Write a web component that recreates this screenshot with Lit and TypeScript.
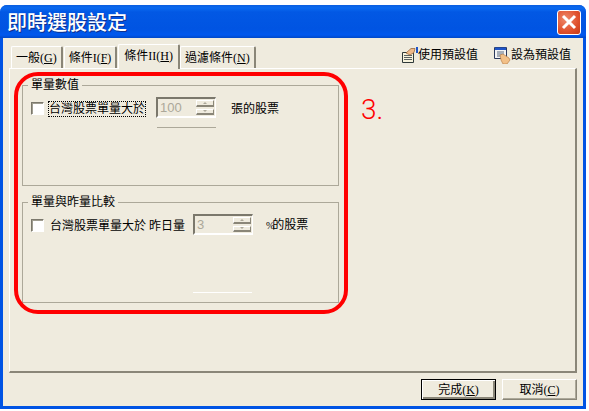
import { LitElement, css, html } from "lit";
import { customElement } from "lit/decorators.js";

@customElement("app-root")
export class AppRoot extends LitElement {
  static styles = css`
    :host {
      display: block;
      width: 589px;
      height: 411px;
      background: #fff;
      font-family: "Liberation Serif", "Noto Sans CJK TC", sans-serif;
      font-size: 12px;
      line-height: 14px;
      color: #000;
      overflow: hidden;
    }
    .window {
      position: relative;
      box-sizing: border-box;
      width: 586px;
      height: 404px;
      margin-top: 5px;
      display: flex;
      flex-direction: column;
      background: #0053e4;
      border-radius: 7px 7px 0 0;
      padding: 0 3px 3px;
    }
    .titlebar {
      flex: none;
      height: 33px;
      margin: 0 -3px;
      padding: 0 0 0 7px;
      display: flex;
      align-items: center;
      justify-content: space-between;
      border-radius: 7px 7px 0 0;
      background: linear-gradient(to bottom, #0a5ee0 0, #0a6af0 3px, #0258e4 7px, #0054e2 24px, #0058ee 30px, #0048c8 33px);
    }
    .title {
      color: #fff;
      font-family: "Noto Sans CJK TC", sans-serif;
      font-size: 20px;
      line-height: 24px;
      font-weight: 500;
      text-shadow: 1px 1px 0 #0f2f8c;
    }
    .close {
      box-sizing: border-box;
      width: 24px;
      height: 25px;
      margin: 1px 5px 0 0;
      border: 1px solid #fff;
      border-radius: 3px;
      background: radial-gradient(circle at 35% 35%, #ee8a6c, #e0502c 60%, #c43a18);
      display: flex;
      align-items: center;
      justify-content: center;
    }
    .body {
      flex: 1;
      background: #efebde;
      padding: 6px 6px 6px;
      display: flex;
      flex-direction: column;
    }
    .tabrow {
      flex: none;
      height: 24px;
      display: flex;
      align-items: flex-end;
      justify-content: space-between;
    }
    .tabs {
      display: flex;
      align-items: flex-end;
      margin-left: 2px;
    }
    .tab {
      box-sizing: border-box;
      height: 22px;
      padding: 4px 4px 0;
      margin-right: 1px;
      border: 1px solid #fff;
      border-right: 2px solid #8a8678;
      border-bottom: none;
      border-radius: 2px 2px 0 0;
      white-space: nowrap;
    }
    .tab.active {
      position: relative;
      height: 25px;
      margin: 0 0 -1px 0;
      padding: 4px 5px 0;
      background: #efebde;
    }
    .tools {
      display: flex;
      align-self: flex-start;
      gap: 16px;
      margin-top: 2px;
      padding-right: 6px;
    }
    .tool {
      display: flex;
      align-items: center;
      height: 18px;
    }
    .tool svg {
      flex: none;
    }
    .panel {
      flex: none;
      box-sizing: border-box;
      height: 305px;
      border: 1px solid #fff;
      border-right: 2px solid #8a8678;
      border-bottom: 2px solid #8a8678;
      padding: 16px 236px 0 12px;
      display: flex;
      flex-direction: column;
      gap: 16px;
    }
    .group {
      position: relative;
      box-sizing: border-box;
      height: 101px;
      border: 1px solid #aca899;
      padding: 11px 8px 0;
    }
    .legend {
      position: absolute;
      top: -8px;
      left: 5px;
      padding: 0 3px;
      background: #efebde;
    }
    .row {
      display: flex;
      align-items: center;
      height: 21px;
    }
    .check {
      flex: none;
      box-sizing: border-box;
      width: 13px;
      height: 13px;
      margin: 2px 5px 0 0;
      background: #fff;
      border: 1px solid;
      border-color: #7b786c #fff #fff #7b786c;
      box-shadow: inset 1px 1px 0 #a09d90;
    }
    .label {
      white-space: nowrap;
      margin-top: 2px;
    }
    .label.focus {
      outline: 1px dotted #000;
    }
    .label.plain {
      margin-left: 1px;
    }
    .spin {
      flex: none;
      box-sizing: border-box;
      width: 60px;
      height: 21px;
      display: flex;
      justify-content: space-between;
      padding: 1px 1px 1px 2px;
      border: 2px solid #7b786c;
      border-right: 1px solid #fff;
      border-bottom: 2px solid #fff;
      color: #aca899;
      font-family: "Liberation Sans", sans-serif;
      font-size: 13px;
    }
    .spin-value {
      line-height: 15px;
    }
    .arrows {
      display: flex;
      flex-direction: column;
      gap: 2px;
      width: 18px;
    }
    .arrow {
      box-sizing: border-box;
      flex: 1;
      background: #efebde;
      border: 1px solid #fff;
      border-right-color: #8a8678;
      border-bottom: 2px solid #8a8678;
      display: flex;
      align-items: center;
      justify-content: center;
    }
    .tick {
      width: 0;
      height: 0;
      border-left: 2px solid transparent;
      border-right: 2px solid transparent;
    }
    .tick.up {
      border-bottom: 2px solid #aca899;
    }
    .tick.down {
      border-top: 2px solid #aca899;
    }
    .suffix {
      white-space: nowrap;
      margin-top: 2px;
    }
    .pct {
      font-size: 10px;
      letter-spacing: -2px;
    }
    .line {
      width: 59px;
      height: 1px;
    }
    .line.grey {
      background: #aca899;
      margin: 9px 0 0 126px;
    }
    .line.white {
      background: #fff;
      margin: 57px 0 0 162px;
    }
    .footer {
      flex: 1;
      display: flex;
      justify-content: flex-end;
      align-items: flex-end;
      gap: 6px;
    }
    .button {
      box-sizing: border-box;
      width: 75px;
      height: 21px;
      display: flex;
      align-items: center;
      justify-content: center;
      background: #efebde;
      border: 1px solid #fff;
      border-right-color: #8a8678;
      border-bottom-color: #8a8678;
      box-shadow: inset -1px -1px 0 #aca899;
    }
    .button.default {
      border: 1px solid #000;
      box-shadow: inset 1px 1px 0 #fff, inset -2px -2px 0 #8a8678;
    }
    .mark {
      position: absolute;
      left: 14px;
      top: 67px;
      width: 334px;
      height: 242px;
      box-sizing: border-box;
      border: 4px solid #ff0000;
      border-radius: 24px;
      pointer-events: none;
    }
    .note {
      position: absolute;
      left: 361px;
      top: 89px;
      font-family: Roboto, "Liberation Sans", sans-serif;
      font-weight: 300;
      font-size: 28px;
      line-height: 32px;
      color: #ff0000;
    }
  `;

  render() {
    return html`
      <div class="window">
        <div class="titlebar">
          <div class="title">即時選股設定</div>
          <div class="close">
            <svg width="16" height="16" viewBox="0 0 16 16">
              <path d="M2 2 14 14M14 2 2 14" stroke="#fff" stroke-width="3" fill="none" />
            </svg>
          </div>
        </div>
        <div class="body">
          <div class="tabrow">
            <div class="tabs">
              <div class="tab">一般(<u>G</u>)</div>
              <div class="tab">條件I(<u>F</u>)</div>
              <div class="tab active">條件II(<u>H</u>)</div>
              <div class="tab">過濾條件(<u>N</u>)</div>
            </div>
            <div class="tools">
              <div class="tool">
                <svg width="17" height="17" viewBox="0 0 17 17">
                  <path d="M1.5 5.5h11v10h-11z" fill="#f6f2dc" stroke="#2f3a3a" />
                  <path d="M3 8.5h8M3 10.5h8M3 12.5h8" stroke="#5a6060" />
                  <path d="M5 6 10 1.5h4l-1 4-4 2.5z" fill="#eeb98a" stroke="#8a5a30" stroke-width=".7" />
                  <path d="M15 0h2v6h-2z" fill="#1f55c8" />
                </svg>
                <span>使用預設值</span>
              </div>
              <div class="tool">
                <svg width="17" height="18" viewBox="0 0 17 18">
                  <path d="M.5 1.5h12v11H.5z" fill="#f4f4f4" stroke="#2c3a5c" />
                  <path d="M1 1.5h11v2.5H1z" fill="#1f55c8" />
                  <path d="M3 6h7M3 8h7M3 10h4" stroke="#5a6a80" />
                  <path d="M6 9l3-1 6 4 1 2-3 4H9l-2-4z" fill="#f2c088" stroke="#b0743c" stroke-width=".6" />
                </svg>
                <span>設為預設值</span>
              </div>
            </div>
          </div>
          <div class="panel">
            <div class="group">
              <div class="legend">單量數值</div>
              <div class="row">
                <div class="check"></div>
                <span class="label focus">台灣股票單量大於</span>
                <div class="spin" style="margin-left:11px">
                  <span class="spin-value">100</span>
                  <div class="arrows">
                    <div class="arrow"><i class="tick up"></i></div>
                    <div class="arrow"><i class="tick down"></i></div>
                  </div>
                </div>
                <span class="suffix" style="margin-left:15px">張的股票</span>
              </div>
              <div class="line grey"></div>
            </div>
            <div class="group">
              <div class="legend">單量與昨量比較</div>
              <div class="row">
                <div class="check"></div>
                <span class="label plain">台灣股票單量大於 昨日量</span>
                <div class="spin" style="margin-left:8px">
                  <span class="spin-value">3</span>
                  <div class="arrows">
                    <div class="arrow"><i class="tick up"></i></div>
                    <div class="arrow"><i class="tick down"></i></div>
                  </div>
                </div>
                <span class="suffix" style="margin-left:13px"><span class="pct">%</span>的股票</span>
              </div>
              <div class="line white"></div>
            </div>
          </div>
          <div class="footer">
            <div class="button default">完成(<u>K</u>)</div>
            <div class="button">取消(<u>C</u>)</div>
          </div>
        </div>
        <div class="mark"></div>
        <div class="note">3.</div>
      </div>
    `;
  }
}
